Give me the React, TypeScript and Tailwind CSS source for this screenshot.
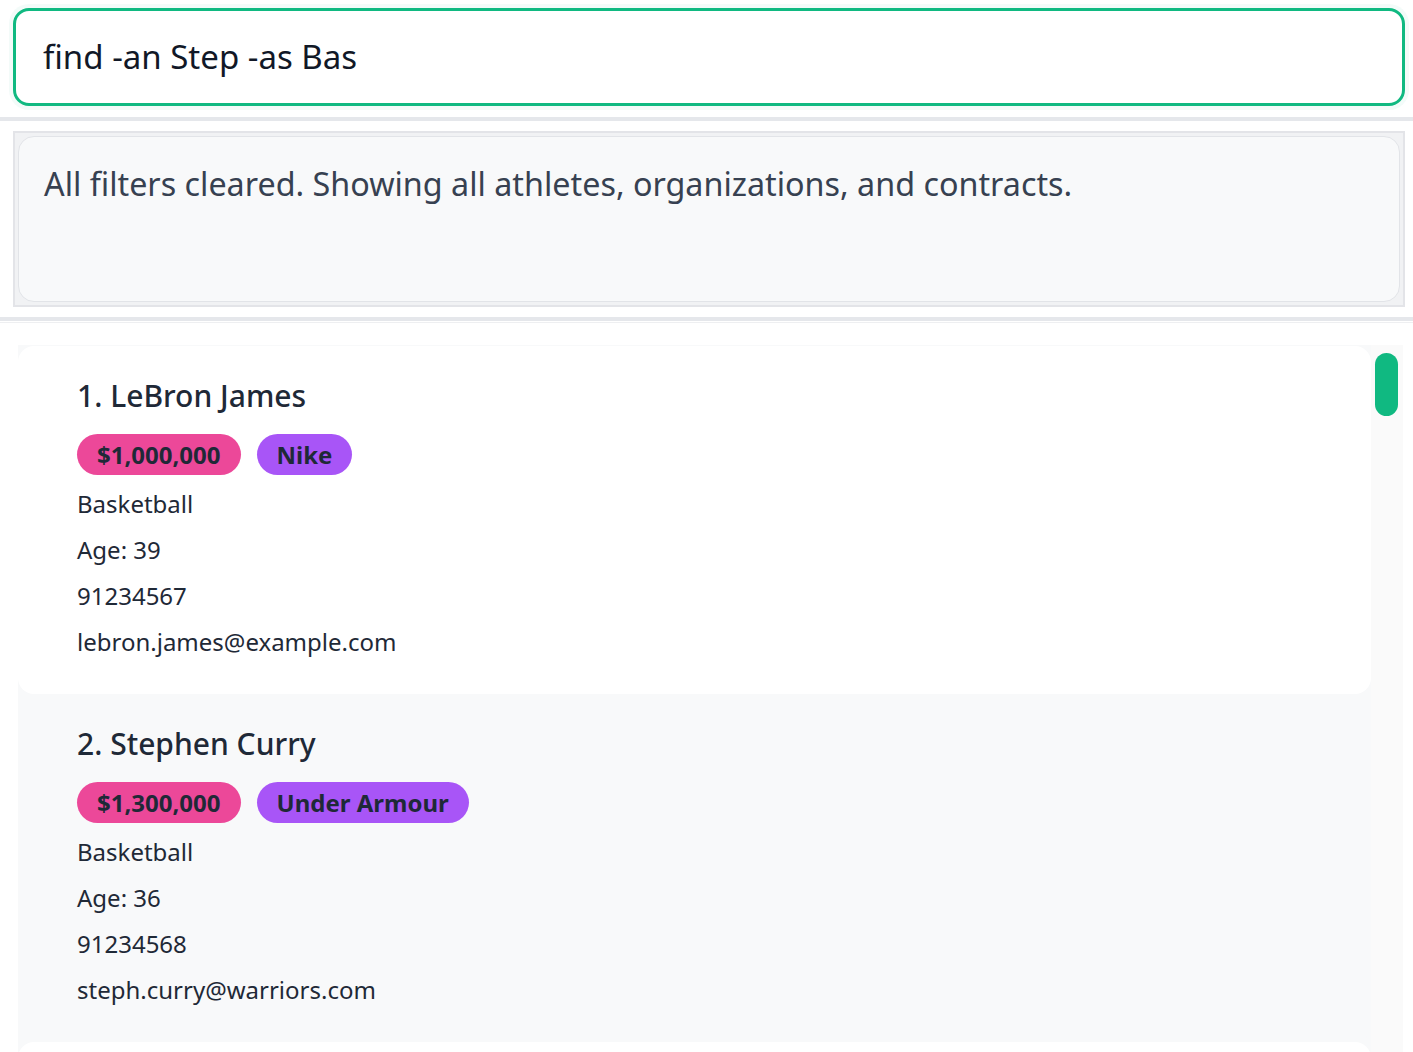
import React from 'react';

interface Athlete {
  name: string;
  amount: string;
  org: string;
  sport: string;
  age: number;
  phone: string;
  email: string;
}

const athletes: Athlete[] = [
  { name: 'LeBron James', amount: '$1,000,000', org: 'Nike', sport: 'Basketball', age: 39, phone: '91234567', email: 'lebron.james@example.com' },
  { name: 'Stephen Curry', amount: '$1,300,000', org: 'Under Armour', sport: 'Basketball', age: 36, phone: '91234568', email: 'steph.curry@warriors.com' },
];

const font = { fontFamily: '"Noto Sans", "Open Sans", sans-serif' };

const AthleteCard = ({ a, index }: { a: Athlete; index: number }) => (
  <div
    className={`shrink-0 h-[348px] rounded-2xl pl-[59px] pt-[30px] ${index % 2 === 0 ? 'bg-white' : 'bg-[#f8f9fa]'}`}
  >
    <div className="text-[30px] leading-[40px] font-medium text-[#1f2937]">
      {index + 1}. {a.name}
    </div>
    <div className="mt-[18px] flex gap-4">
      <span className="h-[41px] px-5 rounded-full bg-[#ec4899] text-[#1f2937] font-bold text-[24px] flex items-center">
        {a.amount}
      </span>
      <span className="h-[41px] px-5 rounded-full bg-[#a855f7] text-[#1f2937] font-bold text-[24px] flex items-center">
        {a.org}
      </span>
    </div>
    <div className="mt-[6px] text-[24px] leading-[46px] text-[#1f2937]">
      <div>{a.sport}</div>
      <div>Age: {a.age}</div>
      <div>{a.phone}</div>
      <div>{a.email}</div>
    </div>
  </div>
);

export default function App() {
  return (
    <div className="h-screen w-full overflow-hidden bg-white flex flex-col" style={font}>
      {/* command box */}
      <div className="pt-2 pl-[13px] pr-2 pb-[11px]">
        <div className="h-[98px] rounded-2xl border-[3px] border-[#10b981] ring-4 ring-[#10b981]/5 flex items-center px-[27px] text-[33px] text-[#111827]">
          find -an Step -as Bas
        </div>
      </div>
      <div className="h-1 bg-[#e5e7eb]" />

      {/* result box */}
      <div className="pt-[10px] pl-[13px] pr-2">
        <div className="border-2 border-[#e3e4e8] bg-[#f1f2f4] p-[3px]">
          <div className="h-[166px] rounded-2xl border border-[#e2e4e8] bg-[#f8f9fa] px-[25px] pt-[22px] text-[32.3px] leading-[48px] text-[#374151]">
            All filters cleared. Showing all athletes, organizations, and contracts.
          </div>
        </div>
      </div>
      <div className="mt-[10px] h-1 bg-[#e5e7eb]" />
      <div className="mt-px h-px bg-[#eeeff1]" />

      {/* list */}
      <div className="mt-[22px] ml-[18px] mr-[10px] flex-1 min-h-0 flex bg-[#f8f9fa]">
        <div className="flex-1 flex flex-col pt-px overflow-hidden">
          {athletes.map((a, i) => (
            <AthleteCard key={a.name} a={a} index={i} />
          ))}
          <div className="shrink-0 h-[348px] rounded-2xl bg-white" />
        </div>
        <div className="w-[32px] bg-[#fafafa] pl-1 pt-2">
          <div className="w-[23px] h-[63px] rounded-full bg-[#10b981]" />
        </div>
      </div>
    </div>
  );
}
